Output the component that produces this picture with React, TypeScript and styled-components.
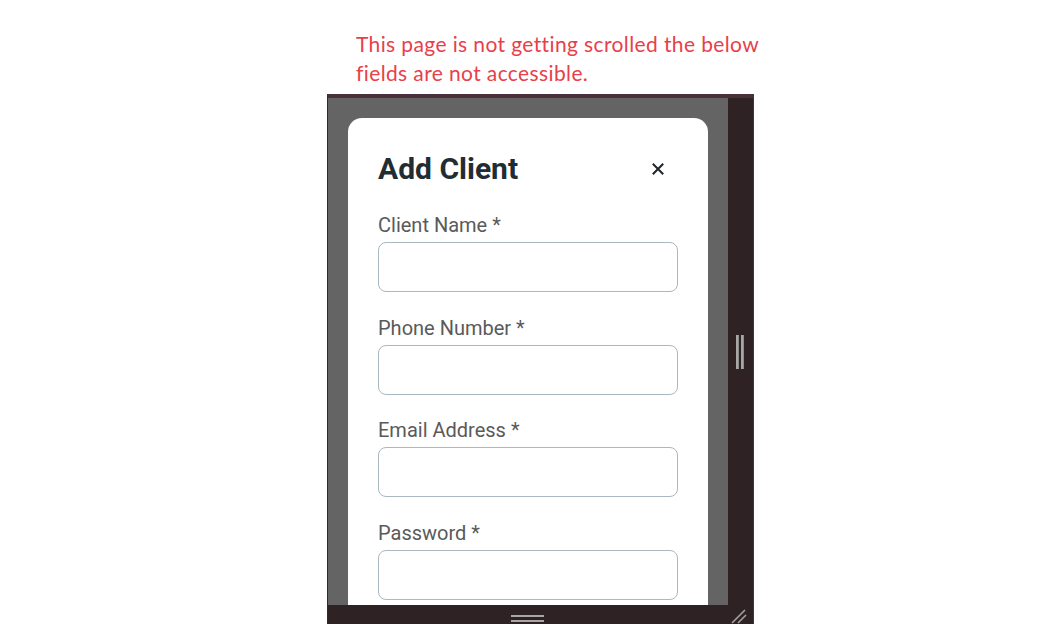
import React from "react";
import styled, { createGlobalStyle } from "styled-components";

const Global = createGlobalStyle`
  html, body { margin: 0; padding: 0; background: #ffffff; }
  body { width: 1046px; height: 624px; overflow: hidden; }
  #root { width: 1046px; height: 624px; }
`;

const Page = styled.div`
  width: 1046px;
  height: 624px;
  overflow: hidden;
  display: flex;
  flex-direction: column;
  padding-left: 327px;
  box-sizing: border-box;
`;

const Note = styled.p`
  margin: 29px 0 0 29px;
  width: 460px;
  font-family: Lato, "Open Sans", sans-serif;
  font-size: 21px;
  letter-spacing: 0.38px;
  line-height: 29px;
  color: #e8404a;
  height: 65px;
  white-space: nowrap;
`;

const Frame = styled.div`
  width: 427px;
  flex: 1;
  box-sizing: border-box;
  border-top: 4px solid #4a3139;
  border-left: 1px solid #2c2c2c;
  border-right: 1px solid #4a3139;
  display: grid;
  grid-template-columns: 400px 25px;
  grid-template-rows: 507px 1fr;
  overflow: hidden;
  background: #2e2225;
`;

const Viewport = styled.div`
  background: #646464;
  overflow: hidden;
  padding: 20px 20px 0 20px;
`;

const SideStrip = styled.div`
  background: #2e2225;
  display: flex;
  justify-content: center;
  align-items: flex-start;
  padding-top: 237px;
  padding-right: 1px;
  gap: 2px;
`;

const VGrip = styled.span`
  width: 3px;
  height: 34px;
  background: #a7a7a7;
  box-shadow: inset -1px 0 0 #8d8d8d;
`;

const BottomBar = styled.div`
  grid-column: 1 / span 2;
  background: #2e2225;
  position: relative;
  display: flex;
  justify-content: center;
`;

const HGripWrap = styled.div`
  display: flex;
  flex-direction: column;
  gap: 3px;
  margin-top: 10px;
  margin-right: 26px;
`;

const HGrip = styled.span`
  width: 33px;
  height: 2px;
  background: #a7a7a7;
`;

const ResizeCorner = styled.svg`
  position: absolute;
  right: 6px;
  bottom: 0;
`;

const Modal = styled.div`
  width: 360px;
  background: #ffffff;
  border-radius: 14px 14px 0 0;
  box-sizing: border-box;
  padding: 33px 30px 30px 30px;
  min-height: 600px;
  font-family: Roboto, "Liberation Sans", sans-serif;
`;

const Header = styled.div`
  display: flex;
  align-items: center;
  justify-content: space-between;
  margin-bottom: 26px;
`;

const Title = styled.h2`
  margin: 0;
  font-size: 30px;
  line-height: 36px;
  font-weight: 700;
  color: #222c33;
`;

const CloseButton = styled.button`
  border: none;
  background: none;
  padding: 0;
  width: 24px;
  height: 24px;
  display: flex;
  align-items: center;
  justify-content: center;
  margin-right: 8px;
  cursor: pointer;
`;

const Field = styled.div`
  display: flex;
  flex-direction: column;
  margin-bottom: 23.5px;
`;

const Label = styled.label`
  font-size: 20px;
  line-height: 24px;
  color: #5a5a5a;
  margin-bottom: 5px;
`;

const Input = styled.input`
  width: 300px;
  height: 50px;
  box-sizing: border-box;
  border: 1px solid #a9b8c1;
  border-radius: 8px;
  background: #fff;
  font-family: Roboto, sans-serif;
  font-size: 18px;
  padding: 0 12px;
  outline: none;
`;

const fields = ["Client Name *", "Phone Number *", "Email Address *", "Password *"];

export default function App() {
  return (
    <>
      <Global />
      <Page>
        <Note>
          This page is not getting scrolled the below
          <br />
          fields are not accessible.
        </Note>
        <Frame>
          <Viewport>
            <Modal>
              <Header>
                <Title>Add Client</Title>
                <CloseButton aria-label="Close">
                  <svg width="12" height="12" viewBox="0 0 12 12">
                    <path d="M1.5 1.5 L10.5 10.5 M10.5 1.5 L1.5 10.5" stroke="#1f2529" strokeWidth="2" strokeLinecap="square" />
                  </svg>
                </CloseButton>
              </Header>
              {fields.map((f) => (
                <Field key={f}>
                  <Label>{f}</Label>
                  <Input />
                </Field>
              ))}
            </Modal>
          </Viewport>
          <SideStrip>
            <VGrip />
            <VGrip />
          </SideStrip>
          <BottomBar>
            <HGripWrap>
              <HGrip />
              <HGrip />
            </HGripWrap>
            <ResizeCorner width="16" height="16" viewBox="0 0 16 16">
              <path d="M1 15 L14 2 M7 15 L15 7" stroke="#a0a0a0" strokeWidth="1.6" />
            </ResizeCorner>
          </BottomBar>
        </Frame>
      </Page>
    </>
  );
}
